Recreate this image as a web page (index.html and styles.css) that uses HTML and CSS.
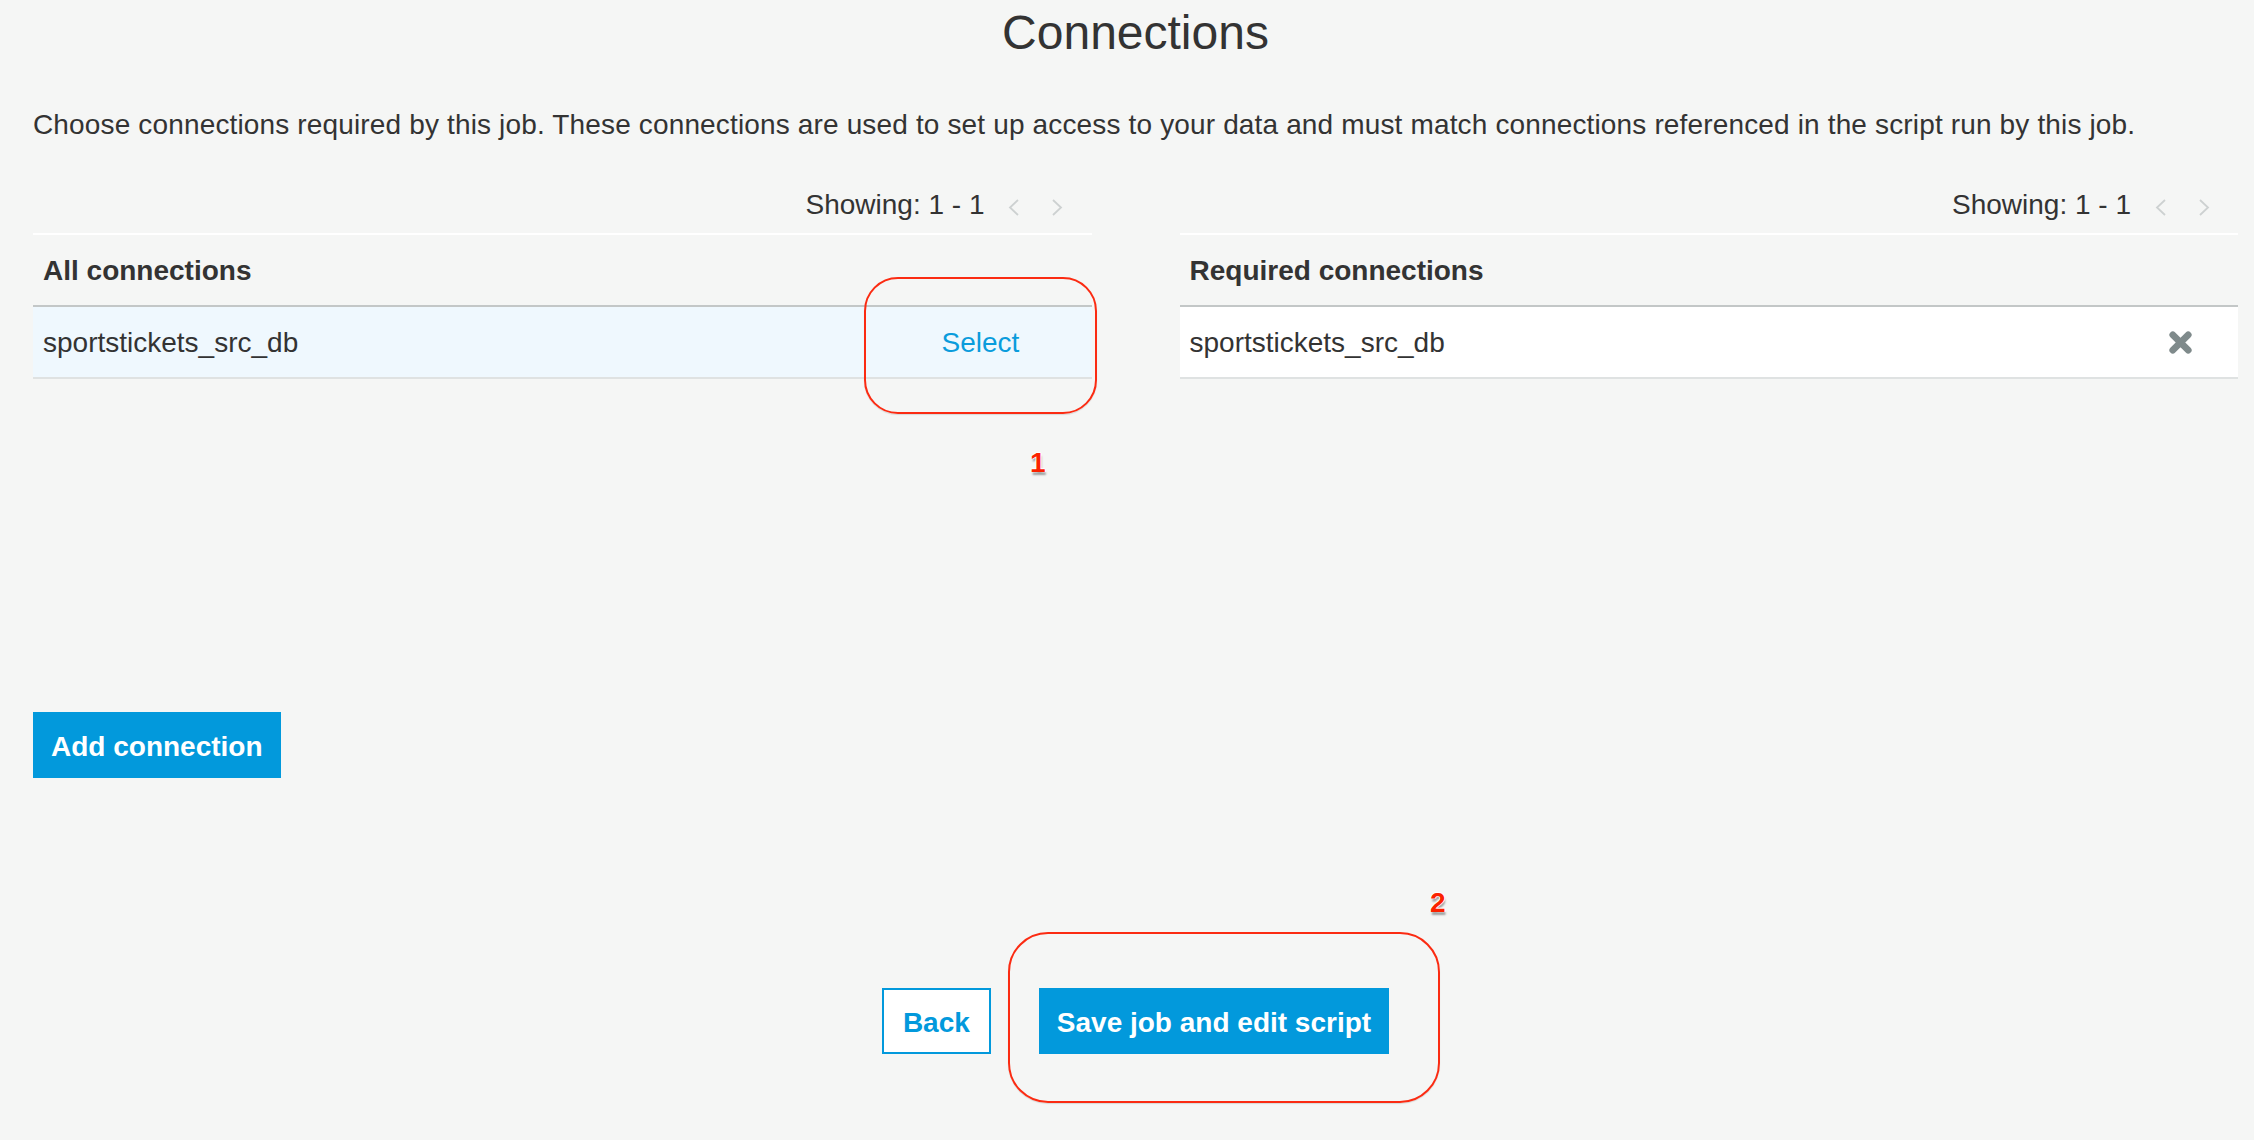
FILE: index.html
```html
<!DOCTYPE html>
<html lang="en">
<head>
<meta charset="utf-8">
<title>Connections</title>
<link rel="stylesheet" href="styles.css">
</head>
<body>
<div class="page">
  <h1 class="title">Connections</h1>
  <p class="intro">Choose connections required by this job. These connections are used to set up access to your data and must match connections referenced in the script run by this job.</p>

  <div class="panels">
    <div class="panel">
      <div class="pager">
        <span class="pager-text">Showing: 1 - 1</span>
        <span class="pager-btn"><svg width="11" height="17" viewBox="0 0 11 17"><polyline points="10,1 2,8.5 10,16" fill="none" stroke="#cdd1d1" stroke-width="1.8"/></svg></span>
        <span class="pager-btn"><svg width="11" height="17" viewBox="0 0 11 17"><polyline points="1,1 9,8.5 1,16" fill="none" stroke="#cdd1d1" stroke-width="1.8"/></svg></span>
      </div>
      <div class="table">
        <div class="thead">All connections</div>
        <div class="row row-selected">
          <div class="cell-name">sportstickets_src_db</div>
          <div class="cell-select">Select</div>
        </div>
      </div>
    </div>

    <div class="panel">
      <div class="pager">
        <span class="pager-text">Showing: 1 - 1</span>
        <span class="pager-btn"><svg width="11" height="17" viewBox="0 0 11 17"><polyline points="10,1 2,8.5 10,16" fill="none" stroke="#cdd1d1" stroke-width="1.8"/></svg></span>
        <span class="pager-btn"><svg width="11" height="17" viewBox="0 0 11 17"><polyline points="1,1 9,8.5 1,16" fill="none" stroke="#cdd1d1" stroke-width="1.8"/></svg></span>
      </div>
      <div class="table">
        <div class="thead">Required connections</div>
        <div class="row row-white">
          <div class="cell-name">sportstickets_src_db</div>
          <div class="cell-remove"><svg width="23" height="23" viewBox="0 0 23 23"><path d="M3.8 3.8 L19.2 19.2 M19.2 3.8 L3.8 19.2" stroke="#7f8a8b" stroke-width="6.8" stroke-linecap="round"/></svg></div>
        </div>
      </div>
    </div>
  </div>

  <div class="add-wrap">
    <button class="btn btn-primary">Add connection</button>
  </div>

  <div class="actions">
    <button class="btn btn-secondary">Back</button>
    <button class="btn btn-primary">Save job and edit script</button>
  </div>

  <div class="annot annot-1"></div>
  <div class="annot annot-2"></div>
  <span class="annot-label label-1">1</span>
  <span class="annot-label label-2">2</span>
</div>
</body>
</html>
```

FILE: styles.css
```css
html, body {
  margin: 0;
  padding: 0;
}

body {
  background: #f5f6f5;
  color: #333333;
  font-family: "Liberation Sans", Arial, Helvetica, sans-serif;
  font-size: 28px;
  height: 1140px;
  overflow: hidden;
}

.page {
  position: relative;
  padding: 5px 16px 0 33px;
}

.title {
  margin: 0;
  font-size: 48px;
  line-height: 56px;
  font-weight: normal;
  text-align: center;
  color: #333333;
}

.intro {
  margin: 44px 0 0;
  font-size: 28px;
  line-height: 40px;
  letter-spacing: 0.15px;
}

.panels {
  display: grid;
  grid-template-columns: 1fr 1fr;
  column-gap: 88px;
  margin-top: 40px;
}

.pager {
  display: flex;
  justify-content: flex-end;
  align-items: center;
  height: 40px;
  padding-right: 12px;
  margin-bottom: 8px;
}

.pager-text {
  line-height: 40px;
  margin-right: 7px;
}

.pager-btn {
  width: 44px;
  height: 40px;
  display: flex;
  align-items: center;
  justify-content: center;
  padding-top: 4px;
  box-sizing: border-box;
}

.table {
  border-top: 2px solid #ffffff;
}

.thead {
  padding: 16px 10px 14px;
  line-height: 40px;
  font-weight: bold;
  border-bottom: 2px solid #c3c7c7;
}

.row {
  display: flex;
  align-items: center;
  border-bottom: 2px solid #dfe2e2;
  line-height: 40px;
}

.row-selected {
  background: #eff8fe;
}

.row-white {
  background: #ffffff;
}

.cell-name {
  flex: 1;
  padding: 16px 10px 14px;
}

.cell-select {
  width: 222px;
  text-align: center;
  color: #0a9cdc;
  padding-top: 2px;
}

.cell-remove {
  width: 116px;
  display: flex;
  justify-content: center;
  align-items: center;
  height: 70px;
}

.add-wrap {
  margin-top: 333px;
  display: flex;
}

.btn {
  font-family: "Liberation Sans", Arial, Helvetica, sans-serif;
  font-size: 28px;
  font-weight: bold;
  height: 66px;
  line-height: 62px;
  padding-top: 2px;
  box-sizing: border-box;
  border: 2px solid #0299dc;
  border-radius: 0;
  cursor: pointer;
  margin: 0;
}

.btn-primary {
  background: #0299dc;
  color: #ffffff;
  padding-left: 16px;
  padding-right: 16px;
}

.btn-secondary {
  background: #ffffff;
  color: #0299dc;
  padding-left: 19px;
  padding-right: 19px;
}

.actions {
  margin-top: 210px;
  display: flex;
  justify-content: center;
  gap: 48px;
}

.annot {
  position: absolute;
  box-sizing: border-box;
  border: 2px solid #fb2b12;
  box-shadow: 0 1px 1px rgba(0, 0, 0, 0.12);
}

.annot-1 {
  left: 864px;
  top: 277px;
  width: 233px;
  height: 137px;
  border-radius: 34px;
}

.annot-2 {
  left: 1008px;
  top: 932px;
  width: 432px;
  height: 171px;
  border-radius: 40px;
}

.annot-label {
  position: absolute;
  font-size: 28px;
  line-height: 28px;
  font-weight: bold;
  color: #fb2200;
  text-shadow: 0 0 1px #ffffff, 1px 0 0 #ffffff, -1px 0 0 #ffffff, 0 -1px 0 #ffffff, 1px 3px 2px rgba(0, 0, 0, 0.35);
}

.label-1 {
  left: 1030px;
  top: 449px;
}

.label-2 {
  left: 1430px;
  top: 889px;
}
```
